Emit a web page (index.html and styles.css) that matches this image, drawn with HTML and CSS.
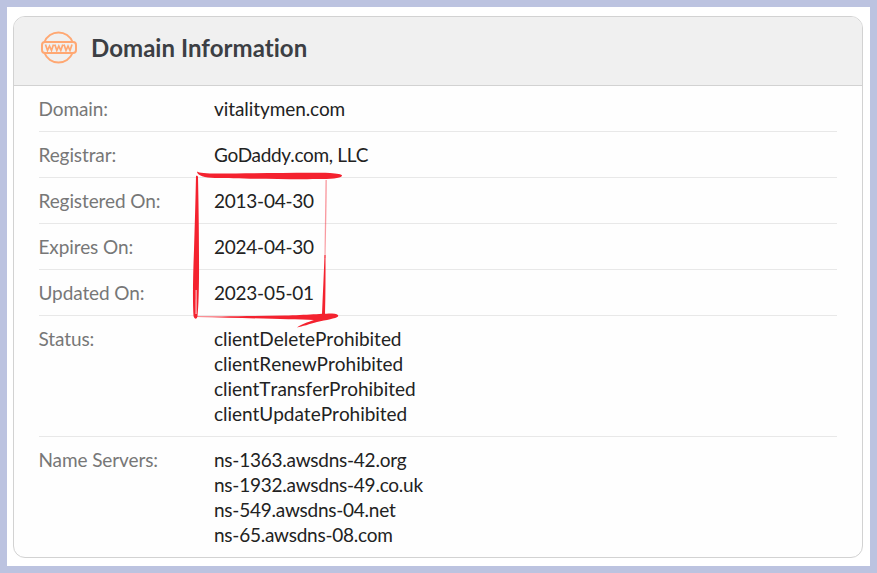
FILE: index.html
```html
<!DOCTYPE html>
<html lang="en">
<head>
<meta charset="utf-8">
<title>Domain Information</title>
<link rel="stylesheet" href="styles.css">
</head>
<body>
<div class="frame">
  <section class="card">
    <header class="card-head">
      <svg class="www" viewBox="0 0 38 34" width="38" height="34" aria-hidden="true">
        <g fill="none" stroke="#ffa873" stroke-width="2">
          <path d="M4.500 11A15 15 0 0 1 32.500 11"/>
          <path d="M4.500 22A15 15 0 0 0 32.500 22"/>
          <rect x="2" y="11" width="34" height="11" rx="3"/>
          <path stroke-width="1.700" d="M5.500 13.500l2 6 2-4.500 2 4.500 2-6M14.800 13.500l2 6 2-4.500 2 4.500 2-6M24 13.500l2 6 2-4.500 2 4.500 2-6"/>
        </g>
      </svg>
      <h1 class="card-title">Domain Information</h1>
    </header>
    <div class="card-body">
      <dl class="row"><dt>Domain:</dt><dd class="site">vitalitymen.com</dd></dl>
      <dl class="row"><dt>Registrar:</dt><dd class="org">GoDaddy.com, LLC</dd></dl>
      <dl class="row"><dt>Registered On:</dt><dd class="num">2013-04-30</dd></dl>
      <dl class="row"><dt>Expires On:</dt><dd class="num">2024-04-30</dd></dl>
      <dl class="row"><dt>Updated On:</dt><dd class="num">2023-05-01</dd></dl>
      <dl class="row"><dt>Status:</dt><dd>clientDeleteProhibited<br>clientRenewProhibited<br>clientTransferProhibited<br>clientUpdateProhibited</dd></dl>
      <dl class="row"><dt>Name Servers:</dt><dd class="num">ns-1363.awsdns-42.org<br>ns-1932.awsdns-49.co.uk<br>ns-549.awsdns-04.net<br>ns-65.awsdns-08.com</dd></dl>
    </div>
  </section>
  <svg class="scribble" viewBox="0 0 877 573" width="877" height="573" aria-hidden="true">
    <path fill="#f4222f" d="M197 171.500C199 173 206 173.500 218 173.500C250 173.500 300 172.500 330 173C337 173.300 342 174.500 342 175.500C342 177.500 335 179 322 179C290 179.500 240 178.500 215 178C205 177.800 197 175.500 197 171.500Z"/>
    <path fill="#f4222f" d="M196 176C197 175.500 197.800 176 198 177C198.500 200 199 230 199 258C199.200 280 198.800 305 197.500 316C197 319.500 194.500 319.500 193.500 316C192.500 300 193 275 194 250C194.800 225 195.500 200 196 176Z"/>
    <path fill="#fff" d="M195.700 290L196.500 290L196.500 314L195.600 314Z"/>
    <path fill="#f4222f" fill-opacity=".45" d="M325.500 180L326.800 180C326.700 205 326 235 325.500 258L324.500 258C324.800 235 325.200 205 325.500 180Z"/>
    <path fill="#f4222f" d="M324.500 255L325.500 255C325.600 275 325.500 295 325 314L322 314C322.800 295 323.800 275 324.500 255Z"/>
    <path fill="#f4222f" d="M196 316.500C215 316.500 250 316 285 315.500C305 315 325 313.500 332 313.500C337 313.500 339 315 338 316.500C336 318.500 326 320 317 322C310 324 302 326.500 297 327.500C300 325 308 322 314 320C290 319.500 250 318 196 317Z"/>
  </svg>
</div>
</body>
</html>
```

FILE: styles.css
```css
* { box-sizing: border-box; }
html, body { margin: 0; padding: 0; }
body { width: 877px; height: 573px; overflow: hidden; font-family: Lato, "Liberation Sans", sans-serif; }
.frame {
  position: relative;
  width: 877px;
  height: 573px;
  background: #fff;
  border: 7px solid #bcc3e0;
  padding: 9px 7px 8px 6px;
}
.card {
  height: 542px;
  background: #fefefe;
  border: 1px solid #d2d2d2;
  border-radius: 12px;
  overflow: hidden;
}
.card-head {
  height: 69px;
  display: flex;
  align-items: center;
  gap: 13px;
  padding: 0 0 6px 26px;
  background: #f0f0f0;
  border-bottom: 1px solid #d2d2d2;
}
.www { flex: none; }
.card-title { margin: 0; font-size: 24px; font-weight: 700; color: #3c3f44; line-height: 30px; letter-spacing: .05px; font-variant-ligatures: none; }
.card-body { padding: 0 25px; }
.row {
  display: flex;
  margin: 0;
  padding: 10px 0 10px;
  min-height: 46px;
  border-bottom: 1px solid #e8e8e8;
  font-size: 19px;
  line-height: 25px;
  font-variant-ligatures: none;
}
.row:last-child { border-bottom: 0; }
.row dt { width: 175px; flex: none; color: #777; letter-spacing: -0.1px; margin-left: -0.5px; margin-right: 0.5px; }
.row dd { margin: 0; color: #222; letter-spacing: -0.04px; font-kerning: none; }
.row dd.num { letter-spacing: -0.24px; font-kerning: auto; }
.row dd.site { letter-spacing: -0.08px; font-kerning: auto; }
.row dd.org { letter-spacing: -0.3px; font-kerning: auto; }
.scribble { position: absolute; left: -7px; top: -7px; pointer-events: none; }
```
